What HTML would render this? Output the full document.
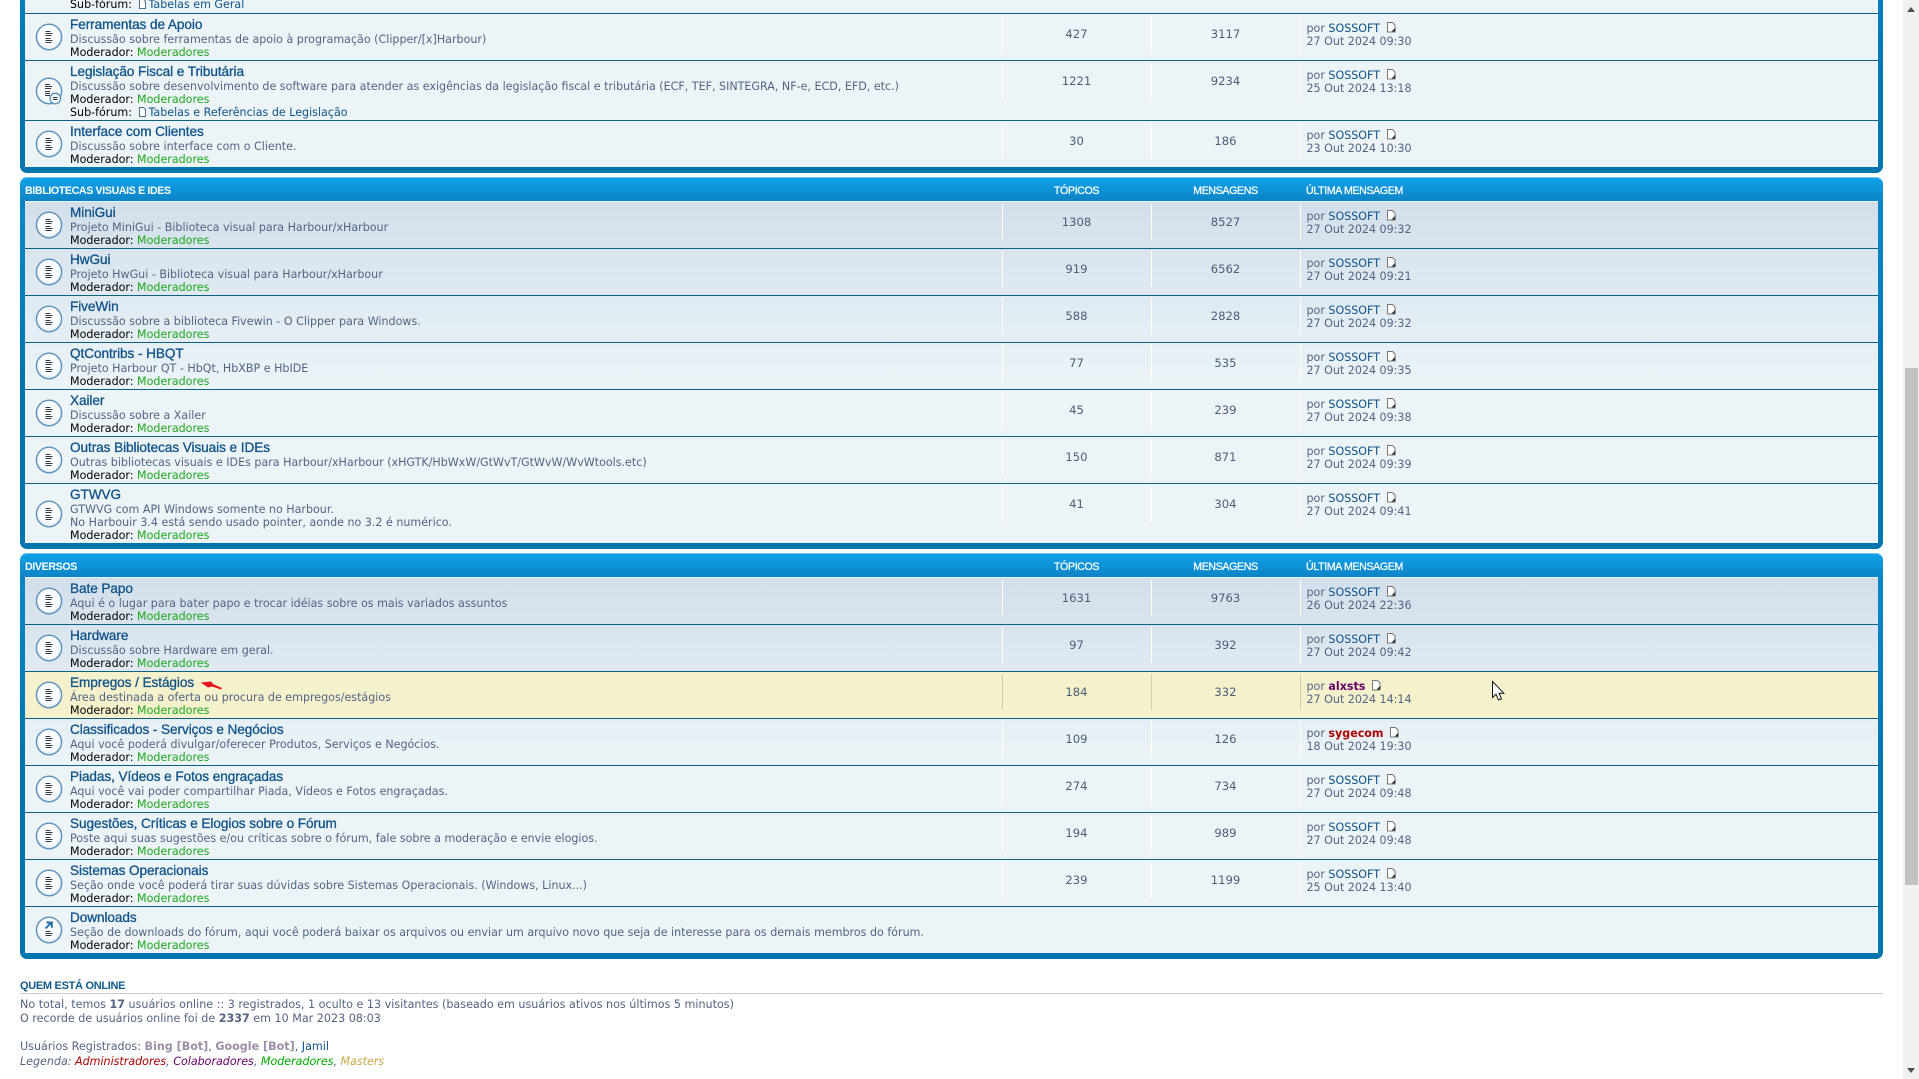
<!DOCTYPE html>
<html lang="pt-BR">
<head>
<meta charset="utf-8">
<title>Fórum</title>
<style>
html,body{margin:0;padding:0;width:1919px;height:1079px;overflow:hidden;background:#fff}
body{position:relative;font-family:"DejaVu Sans","Liberation Sans",sans-serif;font-size:11.1px;color:#536482}
.fb{position:absolute;left:20px;width:1863px;border-radius:7px;background:linear-gradient(#12a3eb 0,#0b84c6 24px,#0a85c8 40px,#0076b1 200px);box-shadow:inset 0 1px 0 #6cc3f0}
.h{position:absolute;top:0;left:0;right:0;height:24px;font:bold 10.6px/28px "Liberation Sans",sans-serif;color:#fff;letter-spacing:-.35px}
.h span{position:absolute;top:0;white-space:nowrap}
.h .a{left:5px}
.h .b{left:956.5px;width:200px;text-align:center;font-weight:normal;-webkit-text-stroke:.25px #fff}
.h .c{left:1105.5px;width:200px;text-align:center;font-weight:normal;-webkit-text-stroke:.25px #fff}
.h .e{left:1286px;font-weight:normal;-webkit-text-stroke:.25px #fff}
.l{position:absolute;left:5px;right:5px;top:24px;background:#ecf4f8}
.g{background:linear-gradient(#d2dfea 0,#ecf4f8 188px,#ecf4f8 100%)}
.r{position:relative;height:46px;border-top:1px solid #0f5f86}
.r.f{border-top-color:#e8f2f8}
.r.y{background:#f6f1cd}
.r.t60{height:59px}
.ic{position:absolute;left:9.5px;top:50%;margin-top:-14px;width:28px;height:28px}
.m{position:absolute;left:45px;top:2px;white-space:nowrap}
.m b.t{display:block;position:relative;top:1px;font:normal 13.6px/16.7px "Liberation Sans",sans-serif;color:#105289;-webkit-text-stroke:.3px #105289;letter-spacing:-.07px}
.m div{line-height:13.33px}
.k{color:#000}
.o{color:#1ca71c}
.sf{color:#105289}
.sf svg{vertical-align:-1px;margin:0 1px 0 3px}
.s{position:absolute;top:2px;width:1px;height:36px;background:#fff}
.y .s{background:#cfcdb0}
.s1{left:977px}.s2{left:1126px}.s3{left:1275px}
.n{position:absolute;top:12.5px;width:120px;text-align:center;font-size:11.6px;line-height:14px;color:#4c5d77}
.n1{left:991.5px}.n2{left:1140.5px}
.p{position:absolute;left:1281.5px;top:8px;line-height:13px;white-space:nowrap}
.p a{color:#105289}
.p svg{vertical-align:-1px;margin-left:2px}
.sb{position:absolute;left:1903px;top:0;width:16px;height:1079px;background:#f1f1f1}
.th{position:absolute;left:2px;top:368px;width:13px;height:517px;background:#c1c1c1}
.on{position:absolute;left:20px;white-space:nowrap;line-height:14px;font-size:11.15px}
</style>
</head>
<body>
<svg width="0" height="0" style="position:absolute">
<defs>
<radialGradient id="rg" cx="50%" cy="45%" r="55%"><stop offset="0" stop-color="#fff"/><stop offset=".75" stop-color="#f8fbfd"/><stop offset="1" stop-color="#d6e6f2"/></radialGradient>
<symbol id="i" viewBox="0 0 28 28">
<ellipse cx="14" cy="14" rx="12.6" ry="12.8" fill="url(#rg)" stroke="#5b91bd" stroke-width="1.4"/>
<path d="M10.500 8.500h5M10.500 10.500h7M10.500 12.500h6M10.500 15.500h5M10.500 17.500h7M10.500 19.500h6" stroke="#2f3a45" stroke-width="1" fill="none" shape-rendering="crispEdges"/>
</symbol>
<symbol id="is" viewBox="0 0 28 28">
<ellipse cx="14" cy="14" rx="12.6" ry="12.8" fill="url(#rg)" stroke="#5b91bd" stroke-width="1.4"/>
<path d="M10 7.500h5M10 9.500h7M10 11.500h6M10 14.500h5M10 16.500h5M10 18.500h5" stroke="#2f3a45" stroke-width="1" fill="none" shape-rendering="crispEdges"/>
<circle cx="20.300" cy="21.500" r="5.300" fill="#f8fbfd" stroke="#5b91bd" stroke-width="1.300"/>
<path d="M18 20.500h4.500M18 22.500h4.500" stroke="#2f3a45" stroke-width="1" fill="none" shape-rendering="crispEdges"/>
</symbol>
<symbol id="id" viewBox="0 0 28 28">
<ellipse cx="14" cy="14" rx="12.6" ry="12.8" fill="url(#rg)" stroke="#5b91bd" stroke-width="1.4"/>
<path d="M10.500 12.500 16.500 6.500M11.500 6.500h5.300v5.300" stroke="#1f6ca5" stroke-width="1.900" fill="none"/>
<path d="M10.500 15.500h5M10.500 17.500h7M10.500 19.500h6" stroke="#2f3a45" stroke-width="1" fill="none" shape-rendering="crispEdges"/>
</symbol>
<symbol id="mp" viewBox="0 0 11 11">
<path d="M1.500 .5h5l2.500 2.500v7h-7.500z" fill="#fff" stroke="#777" stroke-width="1"/>
<path d="M5.500 9.500 9.500 9.500 9.500 5.500z" fill="#333"/>
</symbol>
<symbol id="sp" viewBox="0 0 9 10">
<path d="M1.500 .5h4l2 2v7h-6z" fill="#fff" stroke="#55708c" stroke-width="1"/>
</symbol>
</defs>
</svg>

<!-- Bloco 1 -->
<div class="fb" style="top:-120px;height:293px">
<div class="l" style="top:73px;height:214px;background:#ecf4f8">
<div class="r" style="height:60px;border-top:0"><div class="m" style="top:45px"><div class="k">Sub-fórum: <span class="sf"><svg width="9" height="10"><use href="#sp"/></svg>Tabelas em Geral</span></div></div></div>
<div class="r"><svg class="ic"><use href="#i"/></svg><div class="m"><b class="t">Ferramentas de Apoio</b><div>Discussão sobre ferramentas de apoio à programação (Clipper/[x]Harbour)</div><div class="k">Moderador: <span class="o">Moderadores</span></div></div><i class="s s1"></i><i class="s s2"></i><i class="s s3"></i><div class="n n1">427</div><div class="n n2">3117</div><div class="p">por <a>SOSSOFT</a> <svg width="11" height="11"><use href="#mp"/></svg><br>27 Out 2024 09:30</div></div>
<div class="r t60"><svg class="ic"><use href="#is"/></svg><div class="m"><b class="t">Legislação Fiscal e Tributária</b><div>Discussão sobre desenvolvimento de software para atender as exigências da legislação fiscal e tributária (ECF, TEF, SINTEGRA, NF-e, ECD, EFD, etc.)</div><div class="k">Moderador: <span class="o">Moderadores</span></div><div class="k">Sub-fórum: <span class="sf"><svg width="9" height="10"><use href="#sp"/></svg>Tabelas e Referências de Legislação</span></div></div><i class="s s1"></i><i class="s s2"></i><i class="s s3"></i><div class="n n1">1221</div><div class="n n2">9234</div><div class="p">por <a>SOSSOFT</a> <svg width="11" height="11"><use href="#mp"/></svg><br>25 Out 2024 13:18</div></div>
<div class="r"><svg class="ic"><use href="#i"/></svg><div class="m"><b class="t">Interface com Clientes</b><div>Discussão sobre interface com o Cliente.</div><div class="k">Moderador: <span class="o">Moderadores</span></div></div><i class="s s1"></i><i class="s s2"></i><i class="s s3"></i><div class="n n1">30</div><div class="n n2">186</div><div class="p">por <a>SOSSOFT</a> <svg width="11" height="11"><use href="#mp"/></svg><br>23 Out 2024 10:30</div></div>
</div>
</div>

<!-- Bloco 2 -->
<div class="fb" style="top:177px;height:372px">
<div class="h"><span class="a">BIBLIOTECAS VISUAIS E IDES</span><span class="b">TÓPICOS</span><span class="c">MENSAGENS</span><span class="e">ÚLTIMA MENSAGEM</span></div>
<div class="l g" style="height:342px">
<div class="r f"><svg class="ic"><use href="#i"/></svg><div class="m"><b class="t">MiniGui</b><div>Projeto MiniGui - Biblioteca visual para Harbour/xHarbour</div><div class="k">Moderador: <span class="o">Moderadores</span></div></div><i class="s s1"></i><i class="s s2"></i><i class="s s3"></i><div class="n n1">1308</div><div class="n n2">8527</div><div class="p">por <a>SOSSOFT</a> <svg width="11" height="11"><use href="#mp"/></svg><br>27 Out 2024 09:32</div></div>
<div class="r"><svg class="ic"><use href="#i"/></svg><div class="m"><b class="t">HwGui</b><div>Projeto HwGui - Biblioteca visual para Harbour/xHarbour</div><div class="k">Moderador: <span class="o">Moderadores</span></div></div><i class="s s1"></i><i class="s s2"></i><i class="s s3"></i><div class="n n1">919</div><div class="n n2">6562</div><div class="p">por <a>SOSSOFT</a> <svg width="11" height="11"><use href="#mp"/></svg><br>27 Out 2024 09:21</div></div>
<div class="r"><svg class="ic"><use href="#i"/></svg><div class="m"><b class="t">FiveWin</b><div>Discussão sobre a biblioteca Fivewin - O Clipper para Windows.</div><div class="k">Moderador: <span class="o">Moderadores</span></div></div><i class="s s1"></i><i class="s s2"></i><i class="s s3"></i><div class="n n1">588</div><div class="n n2">2828</div><div class="p">por <a>SOSSOFT</a> <svg width="11" height="11"><use href="#mp"/></svg><br>27 Out 2024 09:32</div></div>
<div class="r"><svg class="ic"><use href="#i"/></svg><div class="m"><b class="t">QtContribs - HBQT</b><div>Projeto Harbour QT - HbQt, HbXBP e HbIDE</div><div class="k">Moderador: <span class="o">Moderadores</span></div></div><i class="s s1"></i><i class="s s2"></i><i class="s s3"></i><div class="n n1">77</div><div class="n n2">535</div><div class="p">por <a>SOSSOFT</a> <svg width="11" height="11"><use href="#mp"/></svg><br>27 Out 2024 09:35</div></div>
<div class="r"><svg class="ic"><use href="#i"/></svg><div class="m"><b class="t">Xailer</b><div>Discussão sobre a Xailer</div><div class="k">Moderador: <span class="o">Moderadores</span></div></div><i class="s s1"></i><i class="s s2"></i><i class="s s3"></i><div class="n n1">45</div><div class="n n2">239</div><div class="p">por <a>SOSSOFT</a> <svg width="11" height="11"><use href="#mp"/></svg><br>27 Out 2024 09:38</div></div>
<div class="r"><svg class="ic"><use href="#i"/></svg><div class="m"><b class="t">Outras Bibliotecas Visuais e IDEs</b><div>Outras bibliotecas visuais e IDEs para Harbour/xHarbour (xHGTK/HbWxW/GtWvT/GtWvW/WvWtools.etc)</div><div class="k">Moderador: <span class="o">Moderadores</span></div></div><i class="s s1"></i><i class="s s2"></i><i class="s s3"></i><div class="n n1">150</div><div class="n n2">871</div><div class="p">por <a>SOSSOFT</a> <svg width="11" height="11"><use href="#mp"/></svg><br>27 Out 2024 09:39</div></div>
<div class="r t60"><svg class="ic"><use href="#i"/></svg><div class="m"><b class="t">GTWVG</b><div>GTWVG com API Windows somente no Harbour.</div><div>No Harbouir 3.4 está sendo usado pointer, aonde no 3.2 é numérico.</div><div class="k">Moderador: <span class="o">Moderadores</span></div></div><i class="s s1"></i><i class="s s2"></i><i class="s s3"></i><div class="n n1">41</div><div class="n n2">304</div><div class="p">por <a>SOSSOFT</a> <svg width="11" height="11"><use href="#mp"/></svg><br>27 Out 2024 09:41</div></div>
</div>
</div>

<!-- Bloco 3 -->
<div class="fb" style="top:553px;height:406px">
<div class="h"><span class="a">DIVERSOS</span><span class="b">TÓPICOS</span><span class="c">MENSAGENS</span><span class="e">ÚLTIMA MENSAGEM</span></div>
<div class="l g" style="height:376px">
<div class="r f"><svg class="ic"><use href="#i"/></svg><div class="m"><b class="t">Bate Papo</b><div>Aqui é o lugar para bater papo e trocar idéias sobre os mais variados assuntos</div><div class="k">Moderador: <span class="o">Moderadores</span></div></div><i class="s s1"></i><i class="s s2"></i><i class="s s3"></i><div class="n n1">1631</div><div class="n n2">9763</div><div class="p">por <a>SOSSOFT</a> <svg width="11" height="11"><use href="#mp"/></svg><br>26 Out 2024 22:36</div></div>
<div class="r"><svg class="ic"><use href="#i"/></svg><div class="m"><b class="t">Hardware</b><div>Discussão sobre Hardware em geral.</div><div class="k">Moderador: <span class="o">Moderadores</span></div></div><i class="s s1"></i><i class="s s2"></i><i class="s s3"></i><div class="n n1">97</div><div class="n n2">392</div><div class="p">por <a>SOSSOFT</a> <svg width="11" height="11"><use href="#mp"/></svg><br>27 Out 2024 09:42</div></div>
<div class="r y"><svg class="ic"><use href="#i"/></svg><div class="m"><b class="t">Empregos / Estágios</b><div>Área destinada a oferta ou procura de empregos/estágios</div><div class="k">Moderador: <span class="o">Moderadores</span></div></div><i class="s s1"></i><i class="s s2"></i><i class="s s3"></i><div class="n n1">184</div><div class="n n2">332</div><div class="p">por <a style="color:#660066;font-weight:bold">alxsts</a> <svg width="11" height="11"><use href="#mp"/></svg><br>27 Out 2024 14:14</div></div>
<div class="r"><svg class="ic"><use href="#i"/></svg><div class="m"><b class="t">Classificados - Serviços e Negócios</b><div>Aqui você poderá divulgar/oferecer Produtos, Serviços e Negócios.</div><div class="k">Moderador: <span class="o">Moderadores</span></div></div><i class="s s1"></i><i class="s s2"></i><i class="s s3"></i><div class="n n1">109</div><div class="n n2">126</div><div class="p">por <a style="color:#aa0000;font-weight:bold">sygecom</a> <svg width="11" height="11"><use href="#mp"/></svg><br>18 Out 2024 19:30</div></div>
<div class="r"><svg class="ic"><use href="#i"/></svg><div class="m"><b class="t">Piadas, Vídeos e Fotos engraçadas</b><div>Aqui você vai poder compartilhar Piada, Vídeos e Fotos engraçadas.</div><div class="k">Moderador: <span class="o">Moderadores</span></div></div><i class="s s1"></i><i class="s s2"></i><i class="s s3"></i><div class="n n1">274</div><div class="n n2">734</div><div class="p">por <a>SOSSOFT</a> <svg width="11" height="11"><use href="#mp"/></svg><br>27 Out 2024 09:48</div></div>
<div class="r"><svg class="ic"><use href="#i"/></svg><div class="m"><b class="t">Sugestões, Críticas e Elogios sobre o Fórum</b><div>Poste aqui suas sugestões e/ou críticas sobre o fórum, fale sobre a moderação e envie elogios.</div><div class="k">Moderador: <span class="o">Moderadores</span></div></div><i class="s s1"></i><i class="s s2"></i><i class="s s3"></i><div class="n n1">194</div><div class="n n2">989</div><div class="p">por <a>SOSSOFT</a> <svg width="11" height="11"><use href="#mp"/></svg><br>27 Out 2024 09:48</div></div>
<div class="r"><svg class="ic"><use href="#i"/></svg><div class="m"><b class="t">Sistemas Operacionais</b><div>Seção onde você poderá tirar suas dúvidas sobre Sistemas Operacionais. (Windows, Linux...)</div><div class="k">Moderador: <span class="o">Moderadores</span></div></div><i class="s s1"></i><i class="s s2"></i><i class="s s3"></i><div class="n n1">239</div><div class="n n2">1199</div><div class="p">por <a>SOSSOFT</a> <svg width="11" height="11"><use href="#mp"/></svg><br>25 Out 2024 13:40</div></div>
<div class="r"><svg class="ic"><use href="#id"/></svg><div class="m"><b class="t">Downloads</b><div>Seção de downloads do fórum, aqui você poderá baixar os arquivos ou enviar um arquivo novo que seja de interesse para os demais membros do fórum.</div><div class="k">Moderador: <span class="o">Moderadores</span></div></div></div>
</div>
</div>

<!-- Seta vermelha -->
<svg style="position:absolute;left:198px;top:678px" width="28" height="15"><path d="M2.700 4.500 13 3.500 15 6 24 10 23 11.500 14 8.500 10 9.500z" fill="#e5141c"/></svg>

<!-- Quem está online -->
<div class="on" style="top:978.500px;font:bold 11px/14px 'Liberation Sans',sans-serif;color:#115a8a;letter-spacing:-.3px">QUEM ESTÁ ONLINE</div>
<div style="position:absolute;left:20px;top:993px;width:1863px;height:1px;background:#ccc"></div>
<div class="on" style="top:997.500px">No total, temos <b>17</b> usuários online :: 3 registrados, 1 oculto e 13 visitantes (baseado em usuários ativos nos últimos 5 minutos)</div>
<div class="on" style="top:1011.500px">O recorde de usuários online foi de <b>2337</b> em 10 Mar 2023 08:03</div>
<div class="on" style="top:1039.500px">Usuários Registrados: <b style="color:#9e8da7">Bing [Bot]</b>, <b style="color:#9e8da7">Google [Bot]</b>, <span style="color:#105289">Jamil</span></div>
<div class="on" style="top:1054.500px;font-size:11.1px;font-style:italic">Legenda: <span style="color:#aa0000">Administradores</span>, <span style="color:#660066">Colaboradores</span>, <span style="color:#00aa00">Moderadores</span>, <span style="color:#c8a84a">Masters</span></div>

<!-- Cursor -->
<svg style="position:absolute;left:1491px;top:680px" width="15" height="22"><path d="M1.500 1.500V17.500L5 14.200 7.500 20 10.500 18.800 8 13.200H12.800z" fill="#fff" stroke="#111" stroke-width="1"/></svg>

<!-- Barra de rolagem -->
<div class="sb">
<svg style="position:absolute;left:3px;top:5px" width="10" height="8"><path d="M1 7 5 2 9 7z" fill="#505050"/></svg>
<div class="th"></div>
<svg style="position:absolute;left:3px;top:1067px" width="10" height="8"><path d="M1 1 5 6 9 1z" fill="#505050"/></svg>
</div>
</body>
</html>
